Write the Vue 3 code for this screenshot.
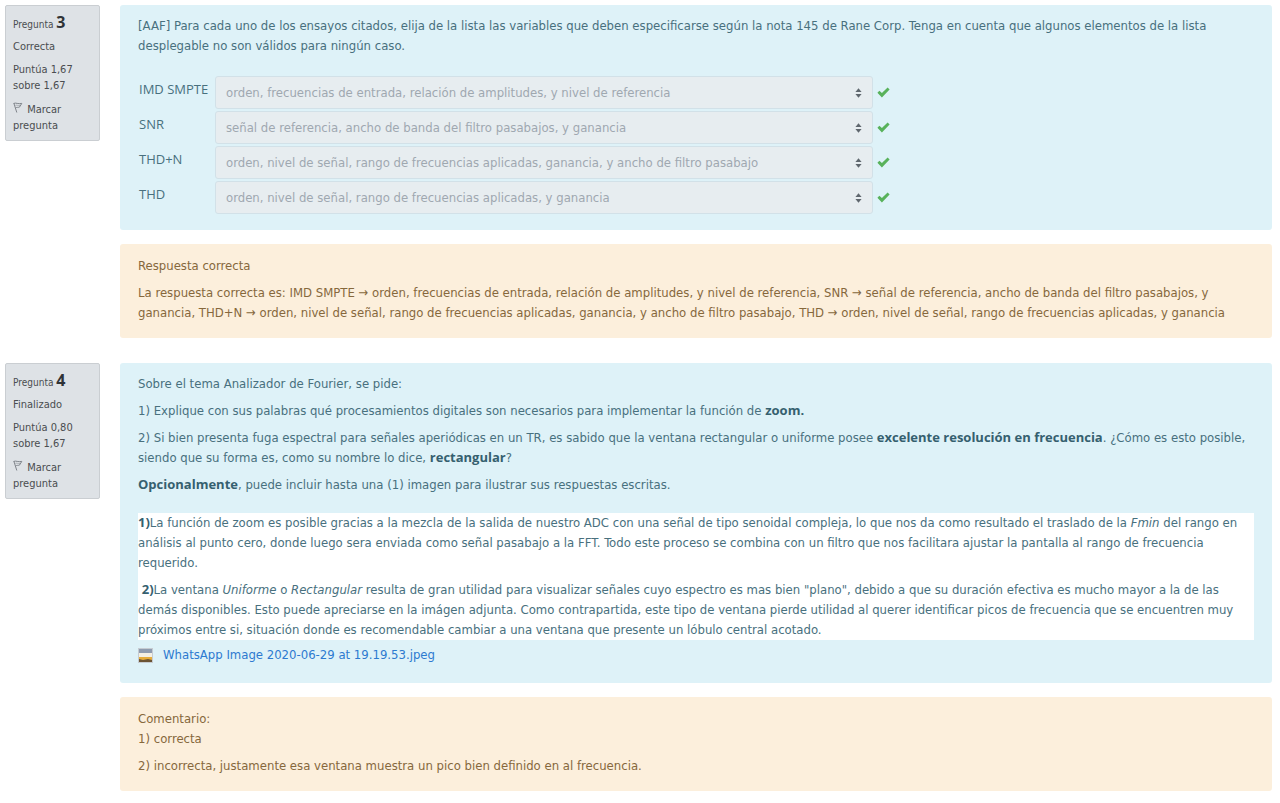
<script setup>
const matches = [
  { id: 'imd', label: 'IMD SMPTE', answer: 'orden, frecuencias de entrada, relación de amplitudes, y nivel de referencia' },
  { id: 'snr', label: 'SNR', answer: 'señal de referencia, ancho de banda del filtro pasabajos, y ganancia' },
  { id: 'thdn', label: 'THD+N', answer: 'orden, nivel de señal, rango de frecuencias aplicadas, ganancia, y ancho de filtro pasabajo' },
  { id: 'thd', label: 'THD', answer: 'orden, nivel de señal, rango de frecuencias aplicadas, y ganancia' },
]
const info = [
  { number: 3, state: 'Correcta', grade: 'Puntúa 1,67 sobre 1,67' },
  { number: 4, state: 'Finalizado', grade: 'Puntúa 0,80 sobre 1,67' },
]
</script>

<template>
  <main class="quiz">
    <section v-for="q in info" :key="q.number" class="question">
      <aside class="info">
        <h3>Pregunta <strong>{{ q.number }}</strong></h3>
        <p>{{ q.state }}</p>
        <p>{{ q.grade }}</p>
        <button type="button" class="flag">
          <svg width="10" height="11" viewBox="0 0 10 11" aria-hidden="true">
            <path d="M0.8 1 L3.8 10.5 M0.8 1.4 C3 0.4 5 2.4 8.8 1.4 L6.4 5.2 C5 5.6 4 5 2.4 6" fill="none" stroke="#80858b" stroke-width="1" />
            <path d="M2.4 3.4 C4 2.8 5 4 7 3.4" fill="none" stroke="#a9adb2" stroke-width="1" />
          </svg>
          Marcar pregunta
        </button>
      </aside>

      <div v-if="q.number === 3" class="content">
        <div class="box formulation">
          <p>[AAF] Para cada uno de los ensayos citados, elija de la lista las variables que deben especificarse según la nota 145 de Rane Corp. Tenga en cuenta que algunos elementos de la lista desplegable no son válidos para ningún caso.</p>
          <div class="answers">
            <div v-for="m in matches" :key="m.id" class="match">
              <label :for="m.id">{{ m.label }}</label>
              <div class="control">
                <select :id="m.id" disabled>
                  <option>{{ m.answer }}</option>
                </select>
                <svg class="arrows" width="7" height="10" viewBox="0 0 7 10" aria-hidden="true">
                  <path d="M3.5 0.2 L6.6 4 H0.4 Z M3.5 9.8 L6.6 6 H0.4 Z" fill="#5f676e" />
                </svg>
              </div>
              <svg class="check" width="13" height="11" viewBox="0 0 13 11" role="img" aria-label="Correcta">
                <path d="M0.4 5.8 L2.4 3.8 L4.9 6.1 L10.6 0.6 L12.6 2.6 L4.9 10.4 Z" fill="#58b25b" />
              </svg>
            </div>
          </div>
        </div>
        <div class="box outcome">
          <p>Respuesta correcta</p>
          <p>La respuesta correcta es: IMD SMPTE → orden, frecuencias de entrada, relación de amplitudes, y nivel de referencia, SNR → señal de referencia, ancho de banda del filtro pasabajos, y ganancia, THD+N → orden, nivel de señal, rango de frecuencias aplicadas, ganancia, y ancho de filtro pasabajo, THD → orden, nivel de señal, rango de frecuencias aplicadas, y ganancia</p>
        </div>
      </div>

      <div v-else class="content">
        <div class="box formulation">
          <p>Sobre el tema Analizador de Fourier, se pide:</p>
          <p>1) Explique con sus palabras qué procesamientos digitales son necesarios para implementar la función de <b>zoom.</b></p>
          <p>2) Si bien presenta fuga espectral para señales aperiódicas en un TR, es sabido que la ventana rectangular o uniforme posee <b>excelente resolución en frecuencia</b>. ¿Cómo es esto posible, siendo que su forma es, como su nombre lo dice, <b>rectangular</b>?</p>
          <p><b>Opcionalmente</b>, puede incluir hasta una (1) imagen para ilustrar sus respuestas escritas.</p>
          <div class="essay">
            <p><b>1)</b>La función de zoom es posible gracias a la mezcla de la salida de nuestro ADC con una señal de tipo senoidal compleja, lo que nos da como resultado el traslado de la <i>Fmin</i> del rango en análisis al punto cero, donde luego sera enviada como señal pasabajo a la FFT. Todo este proceso se combina con un filtro que nos facilitara ajustar la pantalla al rango de frecuencia requerido.</p>
            <p>&nbsp;<b>2)</b>La ventana <i>Uniforme</i> o <i>Rectangular</i> resulta de gran utilidad para visualizar señales cuyo espectro es mas bien "plano", debido a que su duración efectiva es mucho mayor a la de las demás disponibles. Esto puede apreciarse en la imágen adjunta. Como contrapartida, este tipo de ventana pierde utilidad al querer identificar picos de frecuencia que se encuentren muy próximos entre si, situación donde es recomendable cambiar a una ventana que presente un lóbulo central acotado.</p>
          </div>
          <a class="attachment" href="#">
            <svg width="15" height="15" viewBox="0 0 15 15" aria-hidden="true">
              <rect width="15" height="15" fill="#c6ccd2" />
              <rect x="1" y="1" width="13" height="5" fill="#8f9cb0" />
              <rect x="1" y="5" width="13" height="4" fill="#f4f0e4" />
              <rect x="1" y="9" width="13" height="3" fill="#e6ad3c" />
              <path d="M1 11 L5 12 L10 11 L14 12 V14 H1 Z" fill="#6b5434" />
            </svg>
            <span>WhatsApp Image 2020-06-29 at 19.19.53.jpeg</span>
          </a>
        </div>
        <div class="box outcome">
          <p>Comentario:<br>1) correcta</p>
          <p>2) incorrecta, justamente esa ventana muestra un pico bien definido en al frecuencia.</p>
        </div>
      </div>
    </section>
  </main>
</template>

<style>
body {
  background: #fff;
}
</style>

<style scoped>
.quiz {
  display: flex;
  flex-direction: column;
  gap: 25px;
  padding: 5px 8px 12px 5px;
  font: 13px/20px "DejaVu Sans Condensed", "Open Sans", sans-serif;
}
.question {
  display: flex;
  align-items: flex-start;
  gap: 20px;
}
.info {
  box-sizing: border-box;
  flex: 0 0 95px;
  padding: 7px 7px 6px;
  border: 1px solid #caced2;
  border-radius: 2px;
  background: #dee2e6;
  color: #4a4d50;
  font-size: 11px;
  line-height: 16px;
}
.info h3 {
  margin: 0 0 5px;
  font-size: 10px;
  font-weight: 400;
  line-height: 18px;
}
.info strong {
  color: #303336;
  font-family: "Open Sans", sans-serif;
  font-size: 16px;
}
.info p {
  margin: 0 0 7px;
}
.flag {
  display: block;
  margin: 0;
  padding: 1px 0 0;
  border: 0;
  background: none;
  color: inherit;
  font: inherit;
  text-align: left;
}
.flag svg {
  margin-right: 1px;
}
.content {
  flex: 1;
  min-width: 0;
}
.box {
  padding: 11px 18px 15px;
  border-radius: 3px;
}
.box p {
  margin: 0 0 7px;
}
.box p:last-child {
  margin-bottom: 0;
}
.formulation {
  margin-bottom: 14px;
  background: #def2f8;
  color: #48707e;
}
.formulation b {
  color: #35606f;
  font-family: "Open Sans", sans-serif;
  line-height: 1;
}
.outcome {
  padding-top: 12px;
  background: #fcefdc;
  color: #86683c;
}
.answers {
  display: flex;
  flex-direction: column;
  gap: 2px;
  margin-top: 20px;
  padding-bottom: 1px;
}
.match {
  display: grid;
  grid-template-columns: 77px minmax(0, 658px) 17px;
  align-items: center;
}
.match label {
  align-self: start;
  padding: 3px 0 0 1px;
  font-family: "Open Sans", sans-serif;
  white-space: nowrap;
}
.control {
  display: grid;
  align-items: center;
}
.control select,
.arrows {
  grid-area: 1 / 1;
}
.control select {
  appearance: none;
  width: 100%;
  height: 33px;
  padding: 0 24px 0 10px;
  border: 1px solid #d2e1e8;
  border-radius: 3px;
  background: #e7edf0;
  color: #9fa8b0;
  font: inherit;
  opacity: 1;
}
.arrows {
  justify-self: end;
  margin-right: 11px;
}
.check {
  margin-left: 4px;
}
.essay {
  margin: 18px 0 5px;
  background: #fff;
}
.attachment {
  display: flex;
  align-items: center;
  gap: 10px;
  padding-bottom: 3px;
  color: #2d7ad0;
  text-decoration: none;
}
</style>
